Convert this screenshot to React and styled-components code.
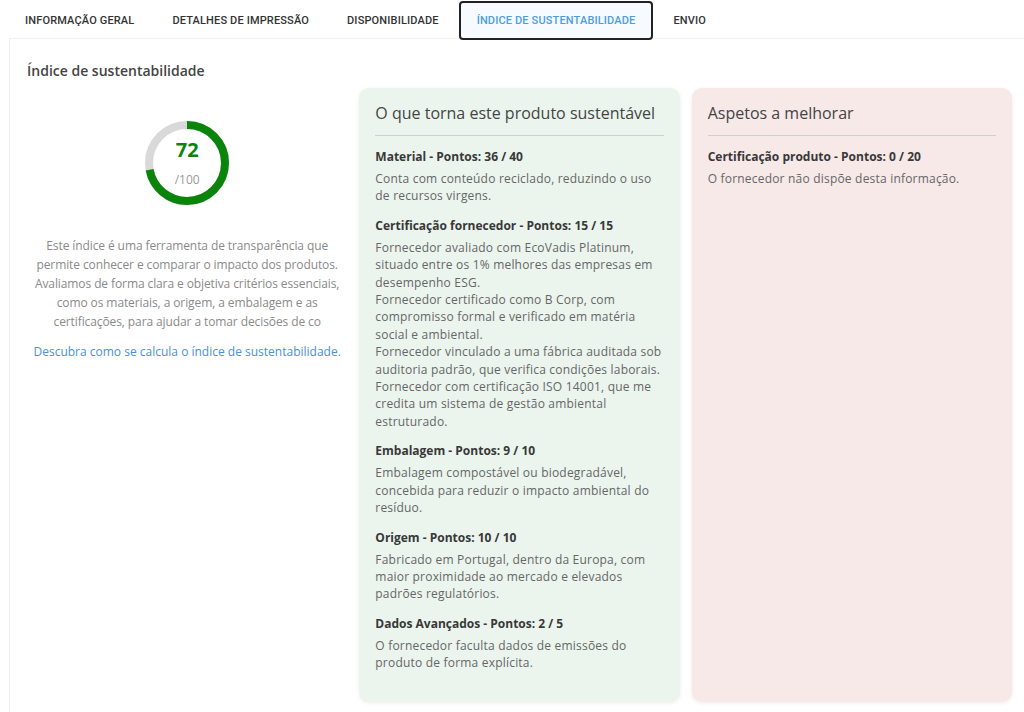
import React from 'react'
import styled, { createGlobalStyle } from 'styled-components'

const Global = createGlobalStyle`
  body {
    margin: 0;
    background: #fff;
    font-family: "Open Sans", "Liberation Sans", sans-serif;
  }
`

const Tabs = styled.div`
  display: flex;
  align-items: stretch;
  gap: 2px;
  height: 40px;
  padding: 1px 0 0 7px;
  box-sizing: border-box;
`

const Tab = styled.div`
  display: flex;
  align-items: center;
  padding: 0 16px;
  font-family: Roboto, "Liberation Sans", sans-serif;
  font-size: 11px;
  font-weight: 500;
  letter-spacing: 0.15px;
  text-transform: uppercase;
  color: ${p => (p.active ? '#4b9ee0' : '#333')};
  background: ${p => (p.active ? '#f7faff' : 'transparent')};
  border: 2px solid ${p => (p.active ? '#222' : 'transparent')};
  border-radius: 4px;
`

const Panel = styled.div`
  margin-left: 9px;
  border-left: 1px solid #eee;
  border-top: 1px solid #f1f1f1;
  padding: 21px 12px 15px 17px;
  margin-top: -2px;
`

const Title = styled.h2`
  margin: 0;
  font-size: 14px;
  font-weight: 600;
  color: #444;
  line-height: 22px;
`

const Grid = styled.div`
  display: grid;
  grid-template-columns: 1fr 1fr 1fr;
  column-gap: 12px;
  margin-top: 6px;
`

const ScoreColumn = styled.div`
  display: flex;
  flex-direction: column;
  align-items: center;
  padding-top: 33px;
`

const Ring = styled.div`
  position: relative;
  width: 84px;
  height: 84px;
`

const RingLabel = styled.div`
  position: absolute;
  inset: 0;
  display: flex;
  flex-direction: column;
  align-items: center;
  padding-top: 17px;
`

const Score = styled.span`
  font-size: 20px;
  font-weight: 700;
  color: #0a840a;
  line-height: 24px;
`

const Max = styled.span`
  font-size: 12px;
  color: #999;
  margin-top: 11px;
  line-height: 14px;
`

const About = styled.p`
  margin: 31px 0 0;
  padding: 0;
  text-align: center;
  font-size: 12px;
  line-height: 19px;
  color: #8a8a8a;
  letter-spacing: -0.1px;
`

const Link = styled.a`
  margin-top: 12px;
  font-size: 12px;
  color: #4a90d9;
  text-decoration: none;
  white-space: nowrap;
`

const Card = styled.div`
  background: ${p => (p.tone === 'good' ? '#ebf5ee' : '#f7e9e8')};
  border-radius: 10px;
  box-shadow: 0 1px 4px rgba(0, 0, 0, 0.08);
  padding: 14px 16px 30px;
`

const CardTitle = styled.h3`
  margin: 0;
  font-size: 16px;
  font-weight: 500;
  color: #444;
  line-height: 22px;
  white-space: nowrap;
  padding-bottom: 11px;
  border-bottom: 1px solid #cfcfcf;
  margin-bottom: 12px;
`

const Item = styled.div`
  & + & {
    margin-top: 12px;
  }
`

const ItemHead = styled.div`
  font-size: 12px;
  font-weight: 700;
  color: #383838;
  line-height: 18px;
  margin-bottom: 4px;
`

const ItemText = styled.div`
  font-size: 12px;
  color: #666;
  line-height: 17.4px;
  letter-spacing: 0.2px;
`

const good = [
  { head: 'Material - Pontos: 36 / 40', lines: ['Conta com conteúdo reciclado, reduzindo o uso de recursos virgens.'] },
  {
    head: 'Certificação fornecedor - Pontos: 15 / 15',
    lines: [
      'Fornecedor avaliado com EcoVadis Platinum, situado entre os 1% melhores das empresas em desempenho ESG.',
      'Fornecedor certificado como B Corp, com compromisso formal e verificado em matéria social e ambiental.',
      'Fornecedor vinculado a uma fábrica auditada sob auditoria padrão, que verifica condições laborais.',
      'Fornecedor com certificação ISO 14001, que me credita um sistema de gestão ambiental estruturado.',
    ],
  },
  { head: 'Embalagem - Pontos: 9 / 10', lines: ['Embalagem compostável ou biodegradável, concebida para reduzir o impacto ambiental do resíduo.'] },
  { head: 'Origem - Pontos: 10 / 10', lines: ['Fabricado em Portugal, dentro da Europa, com maior proximidade ao mercado e elevados padrões regulatórios.'] },
  { head: 'Dados Avançados - Pontos: 2 / 5', lines: ['O fornecedor faculta dados de emissões do produto de forma explícita.'] },
]

const bad = [
  { head: 'Certificação produto - Pontos: 0 / 20', lines: ['O fornecedor não dispõe desta informação.'] },
]

const tabs = ['Informação geral', 'Detalhes de impressão', 'Disponibilidade', 'Índice de sustentabilidade', 'Envio']

const ScoreRing = ({ value }) => {
  const r = 38
  const c = 2 * Math.PI * r
  return (
    <Ring>
      <svg width="84" height="84" viewBox="0 0 84 84">
        <circle cx="42" cy="42" r={r} fill="none" stroke="#d9d9d9" strokeWidth="8" />
        <circle
          cx="42" cy="42" r={r} fill="none" stroke="#0a840a" strokeWidth="8"
          strokeDasharray={`${(c * value) / 100} ${c}`}
          transform="rotate(-90 42 42)"
        />
      </svg>
      <RingLabel>
        <Score>{value}</Score>
        <Max>/100</Max>
      </RingLabel>
    </Ring>
  )
}

const ItemList = ({ items }) =>
  items.map((it, i) => (
    <Item key={i}>
      <ItemHead>{it.head}</ItemHead>
      <ItemText>
        {it.lines.map((l, j) => <div key={j}>{l}</div>)}
      </ItemText>
    </Item>
  ))

export default function App() {
  return (
    <>
      <Global />
      <Tabs>
        {tabs.map(t => (
          <Tab key={t} active={t === 'Índice de sustentabilidade'}>{t}</Tab>
        ))}
      </Tabs>
      <Panel>
        <Title>Índice de sustentabilidade</Title>
        <Grid>
          <ScoreColumn>
            <ScoreRing value={72} />
            <About>
              Este índice é uma ferramenta de transparência que permite conhecer e comparar o impacto dos produtos.
              Avaliamos de forma clara e objetiva critérios essenciais, como os materiais, a origem, a embalagem e as
              certificações, para ajudar a tomar decisões de co
            </About>
            <Link href="#">Descubra como se calcula o índice de sustentabilidade.</Link>
          </ScoreColumn>
          <Card tone="good">
            <CardTitle>O que torna este produto sustentável</CardTitle>
            <ItemList items={good} />
          </Card>
          <Card tone="bad">
            <CardTitle>Aspetos a melhorar</CardTitle>
            <ItemList items={bad} />
          </Card>
        </Grid>
      </Panel>
    </>
  )
}
